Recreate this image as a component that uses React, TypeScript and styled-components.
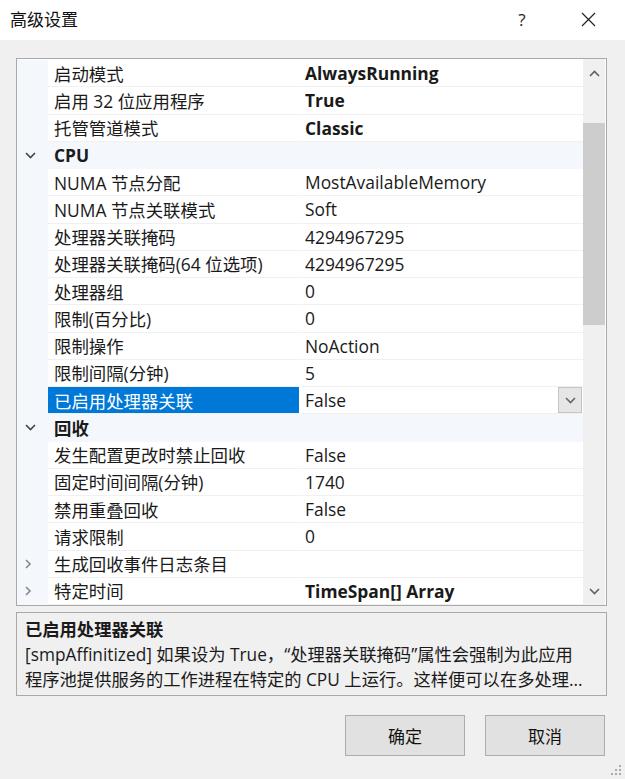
import React from "react";
import styled, { createGlobalStyle } from "styled-components";

type Row = {
  name?: string;
  value?: string;
  bold?: boolean;
  category?: boolean;
  expandable?: boolean;
  selected?: boolean;
};

const rows: Row[] = [
  { name: "启动模式", value: "AlwaysRunning", bold: true },
  { name: "启用 32 位应用程序", value: "True", bold: true },
  { name: "托管管道模式", value: "Classic", bold: true },
  { name: "CPU", category: true },
  { name: "NUMA 节点分配", value: "MostAvailableMemory" },
  { name: "NUMA 节点关联模式", value: "Soft" },
  { name: "处理器关联掩码", value: "4294967295" },
  { name: "处理器关联掩码(64 位选项)", value: "4294967295" },
  { name: "处理器组", value: "0" },
  { name: "限制(百分比)", value: "0" },
  { name: "限制操作", value: "NoAction" },
  { name: "限制间隔(分钟)", value: "5" },
  { name: "已启用处理器关联", value: "False", selected: true },
  { name: "回收", category: true },
  { name: "发生配置更改时禁止回收", value: "False" },
  { name: "固定时间间隔(分钟)", value: "1740" },
  { name: "禁用重叠回收", value: "False" },
  { name: "请求限制", value: "0" },
  { name: "生成回收事件日志条目", value: "", expandable: true },
  { name: "特定时间", value: "TimeSpan[] Array", bold: true, expandable: true },
];

const FONT = `"Open Sans", "Noto Sans CJK SC", sans-serif`;

const GlobalStyle = createGlobalStyle`
  html, body {
    margin: 0;
    padding: 0;
    background: #f0f0f0;
  }
  body {
    font-family: ${FONT};
    color: #1a1a1a;
  }
`;

const Window = styled.div`
  width: 625px;
  height: 779px;
  background: #f0f0f0;
  display: flex;
  flex-direction: column;
  position: relative;
  overflow: hidden;
`;

const TitleBar = styled.div`
  height: 40px;
  background: #ffffff;
  display: flex;
  align-items: center;
  padding-left: 10px;
  padding-right: 14px;
  gap: 20px;
`;

const Title = styled.div`
  font-size: 17px;
  flex: 1;
  color: #111;
  margin-top: -4px;
`;

const TitleButton = styled.div`
  width: 46px;
  height: 36px;
  display: flex;
  align-items: center;
  justify-content: center;
  font-size: 17px;
  color: #222;
  margin-top: -2px;
`;

const Body = styled.div`
  padding: 18px 18px 0 16px;
  display: flex;
  flex-direction: column;
`;

const Grid = styled.div`
  height: 548px;
  border: 1px solid #a9a9a9;
  box-sizing: border-box;
  background: #ffffff;
  display: flex;
`;

const List = styled.div`
  flex: 1;
  display: flex;
  flex-direction: column;
  padding-top: 1px;
`;

const RowBox = styled.div<{ $category?: boolean }>`
  height: 27.3px;
  display: flex;
  background: ${(p) => (p.$category ? "#f4f7fb" : "transparent")};
  font-size: 17.4px;
`;

const Margin = styled.div`
  width: 31px;
  background: #f4f7fb;
  display: flex;
  align-items: center;
  padding-left: 8px;
  box-sizing: border-box;
`;

const NameCell = styled.div<{ $selected?: boolean; $category?: boolean }>`
  width: 251px;
  padding-left: 6px;
  box-sizing: border-box;
  display: flex;
  align-items: center;
  background: ${(p) => (p.$selected ? "#0078d7" : p.$category ? "transparent" : "#ffffff")};
  color: ${(p) => (p.$selected ? "#ffffff" : "#1a1a1a")};
  font-weight: ${(p) => (p.$category ? 700 : 400)};
  border-bottom: ${(p) => (p.$category ? "none" : "1px solid #f0f0f0")};
  white-space: nowrap;
  overflow: hidden;
`;

const ValueCell = styled.div<{ $bold?: boolean }>`
  flex: 1;
  padding-left: 5px;
  margin-left: 1px;
  display: flex;
  align-items: center;
  font-weight: ${(p) => (p.$bold ? 700 : 400)};
  border-bottom: 1px solid #f0f0f0;
  background: #ffffff;
  color: #1a1a1a;
  white-space: nowrap;
`;

const Spacer = styled.div`
  flex: 1;
`;

const DropButton = styled.div`
  width: 22px;
  height: 24px;
  margin-right: 1px;
  background: #e6e6e6;
  border: 1px solid #c4c4c4;
  display: flex;
  align-items: center;
  justify-content: center;
`;

const ScrollBar = styled.div`
  width: 22px;
  margin-right: 1px;
  background: #f0f0f0;
  display: flex;
  flex-direction: column;
`;

const ScrollArrow = styled.div`
  height: 28px;
  display: flex;
  align-items: center;
  justify-content: center;
`;

const ScrollTrack = styled.div`
  flex: 1;
  display: flex;
  flex-direction: column;
`;

const Thumb = styled.div`
  height: 202px;
  margin-top: 36px;
  background: #cdcdcd;
`;

const Description = styled.div`
  margin-top: 6px;
  height: 84px;
  border: 1px solid #a9a9a9;
  box-sizing: border-box;
  padding: 4px 8px;
  font-size: 17.3px;
  line-height: 25px;
  color: #1a1a1a;
`;

const DescTitle = styled.div`
  font-weight: 700;
`;

const DescLine = styled.div`
  white-space: nowrap;
  overflow: hidden;
`;

const Buttons = styled.div`
  display: flex;
  justify-content: flex-end;
  gap: 20px;
  margin-top: 19px;
  padding-right: 2px;
`;

const Button = styled.button`
  width: 120px;
  height: 41px;
  background: #e1e1e1;
  border: 1px solid #adadad;
  font-family: ${FONT};
  font-size: 17px;
  color: #111;
  padding: 0;
`;

const Grip = styled.svg`
  position: absolute;
  right: 3px;
  bottom: 3px;
`;

const Chevron = ({ dir, color = "#555" }: { dir: "down" | "right" | "up"; color?: string }) => {
  const d =
    dir === "down" ? "M1 1 L5.5 5.5 L10 1" : dir === "up" ? "M1 6 L5.5 1.5 L10 6" : "M1 1 L5 5 L1 9";
  const w = dir === "right" ? 7 : 11;
  const h = dir === "right" ? 10 : 7;
  return (
    <svg width={w} height={h} viewBox={`0 0 ${w} ${h}`}>
      <path d={d} fill="none" stroke={color} strokeWidth={1.6} />
    </svg>
  );
};

export default function App() {
  return (
    <Window>
      <GlobalStyle />
      <TitleBar>
        <Title>高级设置</Title>
        <TitleButton>?</TitleButton>
        <TitleButton>
          <svg width="15" height="15" viewBox="0 0 15 15">
            <path d="M1 1 L14 14 M14 1 L1 14" stroke="#222" strokeWidth="1.2" />
          </svg>
        </TitleButton>
      </TitleBar>
      <Body>
        <Grid>
          <List>
            {rows.map((r, i) => (
              <RowBox key={i} $category={r.category}>
                <Margin>
                  {r.category && <Chevron dir="down" color="#444" />}
                  {r.expandable && <Chevron dir="right" color="#888" />}
                </Margin>
                <NameCell $selected={r.selected} $category={r.category}>
                  {r.name}
                </NameCell>
                {r.category ? (
                  <Spacer />
                ) : (
                  <ValueCell $bold={r.bold}>
                    {r.value}
                    {r.selected && (
                      <>
                        <Spacer />
                        <DropButton>
                          <Chevron dir="down" color="#666" />
                        </DropButton>
                      </>
                    )}
                  </ValueCell>
                )}
              </RowBox>
            ))}
          </List>
          <ScrollBar>
            <ScrollArrow>
              <Chevron dir="up" color="#606060" />
            </ScrollArrow>
            <ScrollTrack>
              <Thumb />
            </ScrollTrack>
            <ScrollArrow>
              <Chevron dir="down" color="#606060" />
            </ScrollArrow>
          </ScrollBar>
        </Grid>
        <Description>
          <DescTitle>已启用处理器关联</DescTitle>
          <DescLine>[smpAffinitized] 如果设为 True，“处理器关联掩码”属性会强制为此应用</DescLine>
          <DescLine>程序池提供服务的工作进程在特定的 CPU 上运行。这样便可以在多处理...</DescLine>
        </Description>
        <Buttons>
          <Button>确定</Button>
          <Button>取消</Button>
        </Buttons>
      </Body>
      <Grip width="12" height="12" viewBox="0 0 12 12">
        {[
          [9, 1],
          [9, 5],
          [5, 5],
          [9, 9],
          [5, 9],
          [1, 9],
        ].map(([x, y], i) => (
          <rect key={i} x={x} y={y} width="2" height="2" fill="#aaa" />
        ))}
      </Grip>
    </Window>
  );
}
